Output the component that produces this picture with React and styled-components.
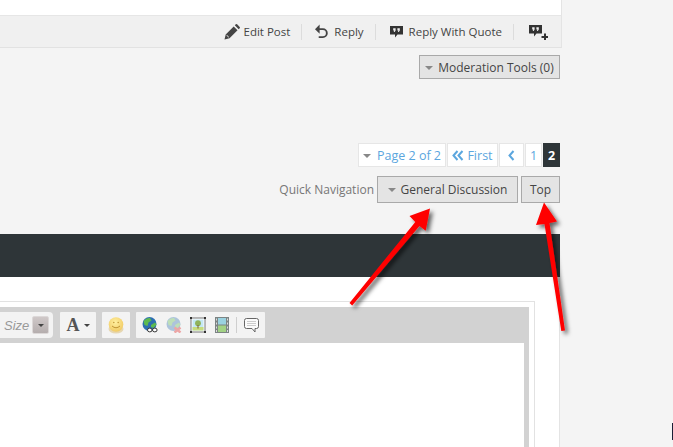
import React from "react";
import styled, { createGlobalStyle } from "styled-components";

const Global = createGlobalStyle`
  html, body { margin: 0; padding: 0; background: #f4f4f4; }
  body { font-family: "Open Sans", "Liberation Sans", sans-serif; }
  #root { width: 673px; height: 447px; overflow: hidden; position: relative; }
`;

const Page = styled.div`
  position: relative;
  width: 673px;
  height: 447px;
  overflow: hidden;
  background: #f4f4f4;
`;
const Main = styled.div`
  width: 561px;
  height: 447px;
  display: flex;
  flex-direction: column;
  & > * { flex-shrink: 0; }
`;
const PostTop = styled.div`
  height: 15px;
  width: 561px;
  background: #fff;
  border-right: 1px solid #e4e4e4;
  border-bottom: 1px solid #e6e6e6;
`;
const PostFooter = styled.div`
  height: 31px;
  width: 548px;
  background: #f0f0f0;
  border-right: 1px solid #e4e4e4;
  border-bottom: 1px solid #e2e2e2;
  display: flex;
  align-items: center;
  justify-content: flex-end;
  padding-right: 13px;
`;
const FooterLink = styled.span`
  display: flex;
  align-items: center;
  gap: ${p => p.$gap || 6}px;
  height: 16px;
  font-size: 11.5px;
  color: #444;
  padding: 0 ${p => p.$right ?? 11}px 0 ${p => p.$left ?? 15}px;
  border-right: ${p => (p.$last ? "none" : "1px solid #dcdcdc")};
`;
const ModRow = styled.div`
  display: flex;
  justify-content: flex-end;
  padding: 7px 1px 0 0;
  height: 95px;
  box-sizing: border-box;
`;
const GreyButton = styled.div`
  display: flex;
  align-items: center;
  justify-content: center;
  gap: 5px;
  box-sizing: border-box;
  height: ${p => p.$h}px;
  width: ${p => p.$w}px;
  background: #e4e4e4;
  border: 1px solid #a9a9a9;
  font-size: 12px;
  color: #444;
`;
const Caret = styled.i`
  display: block;
  width: 0;
  height: 0;
  border-left: 4px solid transparent;
  border-right: 4px solid transparent;
  border-top: 4px solid #888;
  margin-top: 1px;
`;
const PagerRow = styled.div`
  display: flex;
  justify-content: flex-end;
  gap: 1px;
  height: 24px;
  padding-right: 1px;
`;
const PagerCell = styled.div`
  display: flex;
  align-items: center;
  justify-content: center;
  gap: ${p => p.$gap || 0}px;
  box-sizing: border-box;
  width: ${p => p.$w}px;
  height: 24px;
  background: ${p => (p.$current ? "#2e3538" : "#fff")};
  border: 1px solid ${p => (p.$current ? "#2e3538" : "#e6e6e6")};
  color: ${p => (p.$current ? "#fff" : "#5ba6de")};
  font-size: 12.5px;
  font-weight: ${p => (p.$current ? 700 : 400)};
`;
const NavRow = styled.div`
  display: flex;
  justify-content: flex-end;
  align-items: center;
  gap: 3px;
  margin-top: 9px;
  height: 27px;
  padding-right: 1px;
`;
const NavLabel = styled.span`
  font-size: 12px;
  color: #777;
`;
const DarkBar = styled.div`
  margin-top: 31px;
  height: 43px;
  width: 560px;
  background: #2e3538;
`;
const EditorPanel = styled.div`
  flex: 1;
  min-height: 0;
  width: 559px;
  background: #fff;
  border-right: 1px solid #e4e4e4;
  padding-top: 24px;
  box-sizing: content-box;
`;
const EditorFrame = styled.div`
  width: 535px;
  height: 200px;
  box-sizing: border-box;
  border-top: 1px solid #e2e2e2;
  border-right: 1px solid #e2e2e2;
  padding: 5px 5px 0 0;
`;
const Toolbar = styled.div`
  height: 36px;
  background: #d2d2d2;
  display: flex;
  align-items: center;
  gap: 6px;
`;
const ToolGroup = styled.div`
  height: 26px;
  width: ${p => p.$w}px;
  background: #f3f3f3;
  display: flex;
  align-items: center;
  justify-content: ${p => p.$justify || "center"};
  gap: ${p => p.$gap || 0}px;
  padding: ${p => p.$pad || "0"};
  box-sizing: border-box;
  border-radius: ${p => p.$radius || "1px"};
  margin-right: ${p => p.$mr || 0}px;
`;
const IconSlot = styled.span`
  width: 24px;
  display: flex;
  justify-content: center;
`;
const SizeLabel = styled.span`
  font: italic 13px "Liberation Sans", Arial, sans-serif;
  color: #999;
  margin-left: 4px;
`;
const SizeCaret = styled.div`
  width: 17px;
  height: 18px;
  border-radius: 2px;
  background: linear-gradient(#cfc8c8, #b5aeae);
  border: 1px solid #dcd8d8;
  box-sizing: border-box;
  display: flex;
  align-items: center;
  justify-content: center;
`;
const SmallCaret = styled.i`
  display: block;
  width: 0;
  height: 0;
  border-left: 3px solid transparent;
  border-right: 3px solid transparent;
  border-top: 3px solid #444;
`;
const FontA = styled.span`
  font: 700 18px "Liberation Serif", serif;
  color: #555;
`;
const ToolDivider = styled.span`
  width: 1px;
  height: 16px;
  background: #cfcfcf;
  margin: 0 7px 0 2px;
`;
const EditorBody = styled.div`
  width: 529px;
  height: 200px;
  box-sizing: border-box;
  background: #fff;
  border-right: 5px solid #d2d2d2;
`;
const ArrowLayer = styled.svg`
  position: absolute;
  left: 0;
  top: 0;
  pointer-events: none;
`;
const EdgeMark = styled.div`
  position: absolute;
  left: 672px;
  top: 423px;
  width: 1px;
  height: 17px;
  background: #1a1f36;
`;

const Pencil = () => (
  <svg width="16" height="16" viewBox="0 0 16 16">
    <path fill="#444" d="M0.500 15.500l1.200-5 8-8 3.800 3.800-8 8zM10.800 1.300l1-1a1 1 0 0 1 1.300 0l2.600 2.600a1 1 0 0 1 0 1.300l-1 1z" />
    <path fill="#f0f0f0" d="M2.800 10.800l2.400 2.400-.7.300-2-2z" />
  </svg>
);
const Undo = () => (
  <svg width="13" height="15" viewBox="0 0 14 15">
    <path fill="none" stroke="#444" strokeWidth="2" d="M3 5h5.500a4 4 0 0 1 0 8.500H4" />
    <path fill="#444" d="M5 0v10L0 5z" />
  </svg>
);
const Quote = ({ plus }) => (
  <svg width={plus ? 19 : 13} height={plus ? 16 : 13} viewBox={plus ? "0 0 19 16" : "0 0 13 13"}>
    <path fill="#333" d="M0 1h13v8.500H7.500L5 12.500V9.500H0z" />
    <path fill="#f0f0f0" d="M3.200 3.200h2.400v2.200l-1 1.600H3.700l.5-1.400h-1zM7.400 3.200h2.400v2.200l-1 1.600h-.9l.5-1.400h-1z" />
    {plus && <path fill="#333" d="M15 9.500h2V12h2v2h-2v2h-2v-2h-2.500v-2H15z" />}
  </svg>
);
const Chevrons = ({ n = 2 }) => (
  <svg width={n === 2 ? 12 : 7} height="11" viewBox={n === 2 ? "0 0 12 11" : "0 0 7 11"}>
    <path fill="none" stroke="#5ba6de" strokeWidth="2" d="M5.500 1L1.500 5.500 5.500 10" />
    {n === 2 && <path fill="none" stroke="#5ba6de" strokeWidth="2" d="M10.500 1L6.500 5.500 10.500 10" />}
  </svg>
);
const Smiley = () => (
  <svg width="16" height="17" viewBox="0 0 16 17">
    <defs>
      <radialGradient id="sm" cx=".45" cy=".35" r=".7">
        <stop offset="0" stopColor="#fff0a0" />
        <stop offset="1" stopColor="#f0c860" />
      </radialGradient>
    </defs>
    <ellipse cx="8" cy="12" rx="7.500" ry="4.500" fill="#e6d6b0" />
    <circle cx="8" cy="7.500" r="7.300" fill="url(#sm)" />
    <path d="M4 9q4 3.500 8 0" fill="none" stroke="#b98c2c" strokeWidth=".9" />
    <circle cx="5.800" cy="5.500" r=".8" fill="#c39a3c" />
    <circle cx="10.200" cy="5.500" r=".8" fill="#c39a3c" />
  </svg>
);
const Globe = ({ faded }) => (
  <svg width="16" height="16" viewBox="0 0 16 16" opacity={faded ? 0.35 : 1}>
    <circle cx="7.500" cy="7" r="7" fill="#2d6fb0" />
    <path fill="#5dbb4e" d="M1.500 4q3-3.500 6.500-3l1.500 2.500-3 2-1 3.500-3-1zM9 8l4-2.500 1.500 2-3 3.500-2.500-1z" />
    {faded ? (
      <path d="M8.500 10.500l6 5M14.500 10.500l-6 5" stroke="#e01818" strokeWidth="2.500" />
    ) : (
      <g fill="#fff" stroke="#333" strokeWidth="1">
        <ellipse cx="7.800" cy="13" rx="2.300" ry="1.900" />
        <ellipse cx="12.800" cy="13" rx="2.300" ry="1.900" />
      </g>
    )}
  </svg>
);
const Picture = () => (
  <svg width="16" height="16" viewBox="0 0 16 16">
    <rect x="1" y="1" width="14" height="14" fill="#fff" stroke="#777" />
    <rect x="2.500" y="2.500" width="11" height="11" fill="#c4e8f4" />
    <path fill="#c6dc7c" d="M2.500 10h11v3.500h-11z" />
    <circle cx="8" cy="6.200" r="2.900" fill="#8fb35a" />
    <path fill="#7a5a32" d="M7.500 8h1v3.500h-1z" />
    <path fill="#333" d="M0 0h2v2H0zM14 0h2v2h-2zM0 14h2v2H0zM14 14h2v2h-2z" />
  </svg>
);
const Film = () => (
  <svg width="14" height="16" viewBox="0 0 14 16">
    <rect x="0" y="0" width="14" height="16" fill="#7c8484" />
    <rect x="3" y="1" width="8" height="6.500" fill="#9ad2e0" />
    <rect x="3" y="8.500" width="8" height="6.500" fill="#a2d284" />
    <path fill="#ddd" d="M1 1.500h1v2H1zM1 5.500h1v2H1zM1 9.500h1v2H1zM1 13h1v2H1zM12 1.500h1v2h-1zM12 5.500h1v2h-1zM12 9.500h1v2h-1zM12 13h1v2h-1z" />
  </svg>
);
const Bubble = () => (
  <svg width="15" height="15" viewBox="0 0 15 15">
    <path fill="#fbfbfb" stroke="#666" d="M2.500.5h10a2 2 0 0 1 2 2v6a2 2 0 0 1-2 2H11v3.500L8 10.500H2.500a2 2 0 0 1-2-2v-6a2 2 0 0 1 2-2z" />
    <path stroke="#ccc" d="M3 3.500h9M3 5.500h9M3 7.500h9" />
  </svg>
);

export default function App() {
  return (
    <Page>
      <Global />
      <Main>
        <PostTop />
        <PostFooter>
          <FooterLink $gap={4}><Pencil />Edit Post</FooterLink>
          <FooterLink $left={13}><Undo />Reply</FooterLink>
          <FooterLink $left={14} $right={11}><Quote />Reply With Quote</FooterLink>
          <FooterLink $last $right={0}><Quote plus /></FooterLink>
        </PostFooter>
        <ModRow>
          <GreyButton $w={141} $h={24}><Caret />Moderation Tools (0)</GreyButton>
        </ModRow>
        <PagerRow>
          <PagerCell $w={88} $gap={6}><Caret />Page 2 of 2</PagerCell>
          <PagerCell $w={51} $gap={3}><Chevrons />First</PagerCell>
          <PagerCell $w={25}><Chevrons n={1} /></PagerCell>
          <PagerCell $w={17}>1</PagerCell>
          <PagerCell $w={17} $current>2</PagerCell>
        </PagerRow>
        <NavRow>
          <NavLabel>Quick Navigation</NavLabel>
          <GreyButton $w={141} $h={27}><Caret />General Discussion</GreyButton>
          <GreyButton $w={39} $h={27}>Top</GreyButton>
        </NavRow>
        <DarkBar />
        <EditorPanel>
          <EditorFrame>
            <Toolbar>
              <ToolGroup $w={53} $justify="space-between" $pad="0 4px 0 0" $radius="0 4px 4px 0" $mr={1}>
                <SizeLabel>Size</SizeLabel>
                <SizeCaret><SmallCaret /></SizeCaret>
              </ToolGroup>
              <ToolGroup $w={36} $gap={4}><FontA>A</FontA><SmallCaret /></ToolGroup>
              <ToolGroup $w={28}><Smiley /></ToolGroup>
              <ToolGroup $w={129} $justify="flex-start" $pad="0 0 0 2px">
                <IconSlot><Globe /></IconSlot>
                <IconSlot><Globe faded /></IconSlot>
                <IconSlot><Picture /></IconSlot>
                <IconSlot><Film /></IconSlot>
                <ToolDivider />
                <Bubble />
              </ToolGroup>
            </Toolbar>
            <EditorBody />
          </EditorFrame>
        </EditorPanel>
      </Main>
      <EdgeMark />
      <ArrowLayer width="673" height="447" viewBox="0 0 673 447">
        <defs>
          <filter id="shadow" x="-30%" y="-30%" width="170%" height="170%">
            <feDropShadow dx="3" dy="3" stdDeviation="2" floodColor="#000" floodOpacity=".6" />
          </filter>
        </defs>
        <g filter="url(#shadow)" fill="#ff0000">
          <path d="M349.500 303l2.700 2.400 67.300-79.500 6.200 4.800 4.300-22.200-20.500 7.500 5.800 6z" />
          <path d="M561.300 331l3.700-.5-15.500-107.500 7.500-1.500-13-19-8 22.500 8.500-1z" />
        </g>
      </ArrowLayer>
    </Page>
  );
}
